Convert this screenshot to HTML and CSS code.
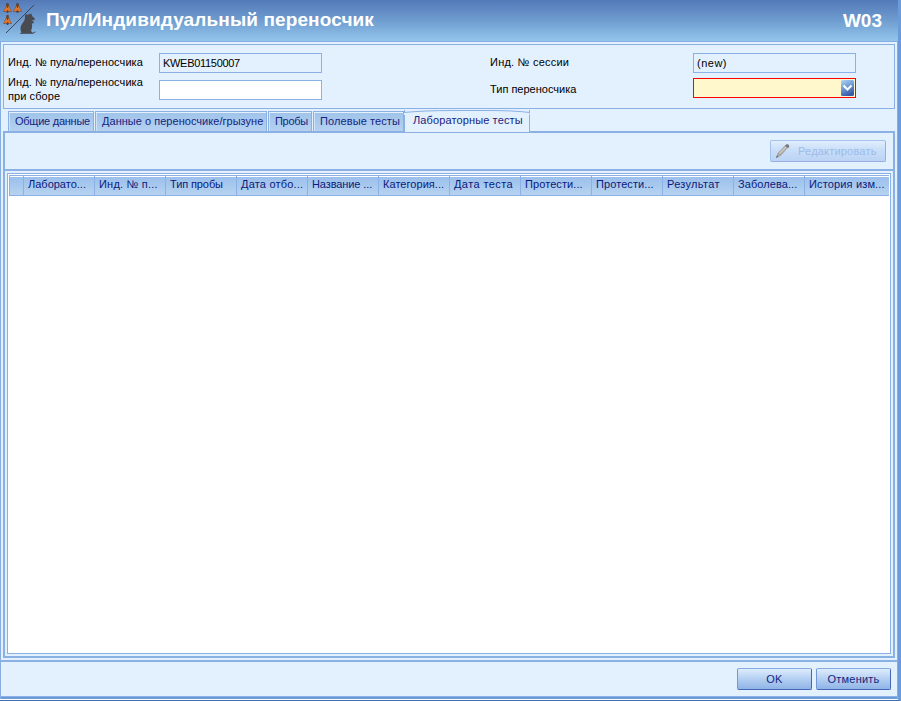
FILE: index.html
```html
<!DOCTYPE html>
<html lang="ru">
<head>
<meta charset="utf-8">
<title>Пул/Индивидуальный переносчик</title>
<link rel="stylesheet" href="styles.css">
</head>
<body>
<div class="window">
  <header class="header">
    <svg class="logo" width="36" height="36" viewBox="0 0 36 36">
      <defs>
        <g id="fly">
          <path d="M3 0H5L5.5 3L8 8V9L5.5 8.6L4.5 10H3.5L2.5 8.6L0 9V8L2.5 3Z" fill="#5a4340"/>
          <path d="M2.6 3.5L.3 8L2.3 8.4L4 7L5.7 8.4L7.7 8L5.4 3.5Z" fill="#e0752a"/>
          <path d="M4 1V5" stroke="#7a3d22"/>
        </g>
      </defs>
      <use href="#fly" x="3.5" y="3"/><use href="#fly" x="13.5" y="3"/><use href="#fly" x="3.5" y="15"/>
      <path d="M6 33L34 5" stroke="#3d4555" stroke-width="1"/>
      <path d="M25 17C24.2 14.6 26.8 13.6 28 15C29.5 12.8 32.6 13.4 32 16L34.8 18.6L34.5 20L31.5 20.6L34 21.8L33.5 23.2L31.8 23.5C32.6 26 31.8 29 31 31L33 33H21.5C19.8 30 20.3 26 22.3 23.5C23.8 21.5 25 20 25 17Z" fill="#494b50"/>
      <path d="M20 33.3H33L35.5 31.8" fill="none" stroke="#454a56" stroke-width="1"/>
    </svg>
    <h1 class="title">Пул/Индивидуальный переносчик</h1>
    <span class="code">W03</span>
  </header>
  <main class="body">
    <section class="form">
      <label class="lab l1">Инд. № пула/переносчика</label>
      <div class="field ro id">KWEB01150007</div>
      <label class="lab l1 session">Инд. № сессии</label>
      <div class="field ro new">(new)</div>
      <label class="lab two">Инд. № пула/переносчика<br>при сборе</label>
      <div class="field low"></div>
      <label class="lab l2">Тип переносчика</label>
      <div class="field combo">
        <svg width="13" height="16" viewBox="0 0 13 16">
          <defs><linearGradient id="cb" x2="0.4" y2="1"><stop offset="0" stop-color="#b4d4f3"/><stop offset=".5" stop-color="#6f9fd8"/><stop offset="1" stop-color="#3c5ba5"/></linearGradient></defs>
          <rect width="13" height="16" rx="1.5" fill="url(#cb)"/>
          <path d="M2.5 5.5L6.5 9.5L10.5 5.5" fill="none" stroke="#fff" stroke-width="2"/>
        </svg>
      </div>
    </section>
    <nav class="tabs">
      <div class="tab t1">Общие данные</div><div class="tab t2">Данные о переносчике/грызуне</div><div class="tab t3">Пробы</div><div class="tab t4">Полевые тесты</div><div class="tab active"><svg width="126" height="5" viewBox="0 0 126 5"><path d="M0 2.5Q20 .5 50 .5H85Q110 .5 125.5 2.5V5H0Z" fill="#e3f0fe"/><path d="M0 2.5Q20 .5 50 .5H85Q110 .5 125.5 2.5" fill="none" stroke="#8ab0e4"/></svg>Лабораторные тесты</div>
    </nav>
    <section class="page">
      <div class="toolbar">
        <button class="btn edit" disabled><svg width="16" height="16" viewBox="0 0 16 16"><path d="M1.5 14.5L3 10L10.5 2.3Q12.5 .5 14 3L6 12.2Z" fill="#a9a5a2" stroke="#9a9da3" stroke-width=".6"/><path d="M4.5 10.5L11 4" stroke="#cdc9c5" stroke-width="1.6"/><path d="M10 2.8L13.2 5.2L14.3 3Q13.5 .8 11.5 1.5Z" fill="#77787c"/><path d="M1 15L2 12.5L3.5 13.8Z" fill="#666"/></svg><span>Редактировать</span></button>
      </div>
      <div class="gridwrap">
        <div class="grid">
          <div class="row">
            <div class="c first"></div><div class="c c1">Лаборато...</div><div class="c c2">Инд. № п...</div><div class="c c3">Тип пробы</div><div class="c c4">Дата отбо...</div><div class="c c5">Название ...</div><div class="c c6">Категория...</div><div class="c c7">Дата теста</div><div class="c c8">Протести...</div><div class="c c8">Протести...</div><div class="c c9">Результат</div><div class="c c10">Заболева...</div><div class="c last">История изм...</div>
          </div>
        </div>
      </div>
    </section>
    <footer class="footer">
      <button class="btn ok">OK</button>
      <button class="btn cancel">Отменить</button>
    </footer>
  </main>
</div>
</body>
</html>
```
FILE: styles.css
```css
* { box-sizing: border-box; }
body {
  margin: 0; width: 901px; height: 701px; overflow: hidden;
  background: #fff;
  font: 11px/14px "Liberation Sans", Arial, sans-serif;
  letter-spacing: 0.08px; color: #000;
}
.window {
  height: 701px; display: flex; flex-direction: column;
  border-right: 3px solid #6a9bdb; border-bottom: 1px solid #3f6cb4;
}
.header {
  height: 41px; flex: none; display: flex; align-items: center;
  background: linear-gradient(#5479b8, #6f9dd0 50%, #93c5ec);
  color: #fff; padding-right: 16px;
}
.logo { display: block; flex: none; align-self: flex-start; margin-right: 10px; }
.title { margin: -1px auto 0 0; font-size: 19px; line-height: 24px; letter-spacing: .12px; font-weight: bold; white-space: nowrap; }
.code { font-size: 19px; line-height: 24px; font-weight: bold; letter-spacing: 0; }
.body {
  height: 658px; flex: none; display: flex; flex-direction: column;
  border: 1px solid #87aee3; border-bottom: 0;
  background: #e3f0fe;
}
.form {
  height: 65px; flex: none; margin: 2px 2px 0; border: 1px solid #8ab0e4;
  display: grid; grid-template-columns: 151px 331px 203px 163px;
  grid-template-rows: 28px 35px; padding-left: 4px;
}
.lab { white-space: nowrap; }
.l1 { padding-top: 10px; }
.session { letter-spacing: .22px; }
.l2 { padding-top: 9px; letter-spacing: 0; }
.two { padding-top: 2px; }
.field { width: 163px; height: 20px; border: 1px solid #8ab0e4; background: #fff; padding: 2px 3px; margin-top: 8px; }
.ro { background: #e3f0fe; }
.id { letter-spacing: -.3px; }
.new { letter-spacing: .5px; }
.low { margin-top: 7px; }
.combo { margin-top: 5px; border-color: #f00; background: #fff8cd; display: flex; justify-content: flex-end; padding: 1px; }
.tabs { height: 22px; flex: none; display: flex; align-items: flex-end; margin: 0 2px 0 7px; color: #16247e; }
.tab {
  height: 20px; border: 1px solid #8ab0e4; border-bottom: 0; margin-right: 1px;
  background: linear-gradient(#9fc3ea, #b5d1f0); box-shadow: inset 0 1px #e5f1fd, inset 1px 0 #cfe2f8;
  padding: 2px 0 0 6px; white-space: nowrap; letter-spacing: 0;
}
.t1 { width: 86px; letter-spacing: -.25px; }
.t2 { width: 172px; letter-spacing: .03px; }
.t3 { width: 44px; letter-spacing: -.3px; }
.t4 { width: 91px; margin: 0; letter-spacing: .1px; }
.active {
  position: relative; z-index: 1; width: 126px; height: 22px; margin: 0 0 -1px;
  background: #e3f0fe; box-shadow: none; padding: 3px 0 0 8px; border-top: 0; letter-spacing: .12px;
}
.active svg { position: absolute; left: -1px; top: 0; z-index: -1; }
.page {
  height: 527px; flex: none; margin: 0 2px; border: 2px solid #8ab0e4;
  display: flex; flex-direction: column;
}
.toolbar { height: 38px; flex: none; border-bottom: 2px solid #8ab0e4; display: flex; justify-content: flex-end; padding: 7px 7px 0 0; }
.gridwrap { flex: 1; padding: 2px; display: flex; }
.grid { flex: 1; background: #fff; border: 1px solid #8ab0e4; padding: 1px 1px 0; }
.row {
  height: 21px; display: flex; color: #0b1a7c;
  border: 1px solid #8ab0e4; border-right: 0;
  background: linear-gradient(#fff 1px, #9bc0ec 1px, #b6d2f0);
}
.c { width: 71px; border-right: 1px solid #8ab0e4; padding: 1px 0 0 4px; white-space: nowrap; }
.c1 { letter-spacing: 0; }
.c2 { letter-spacing: .2px; }
.c9 { letter-spacing: .3px; }
.c3, .c5 { letter-spacing: -.1px; }
.c4 { letter-spacing: .2px; }
.c6 { letter-spacing: .05px; }
.c7 { letter-spacing: .4px; }
.first { width: 14px; padding: 0; }
.last { width: auto; flex: 1; border: 0; letter-spacing: .15px; }
.btn {
  height: 22px; border: 1px solid #6187c9; border-color: #86abe0 #4667b5 #4667b5 #7297d5; border-radius: 2px;
  background: linear-gradient(#deedfc, #b7d2f3 45%, #8fb4e6); color: #16247e;
  font: inherit; letter-spacing: .2px; padding: 0;
}
.edit {
  width: 116px; display: flex; align-items: center; padding-left: 4px; gap: 7px;
  color: #9dbce9; border-color: #a4c3ec #98aee0 #98aee0 #a4c3ec;
  background: linear-gradient(#e0eefd, #c9def8 45%, #bcd3f5);
}
.footer {
  flex: 1; border-top: 2px solid #8ab0e4; margin-top: 2px;
  box-shadow: inset 0 -2px #6a9bdb, inset 0 -3px #8ab0e4;
  display: flex; justify-content: flex-end; padding: 6px 6px 0 0; gap: 4px;
}
.ok, .cancel { width: 75px; }
```
